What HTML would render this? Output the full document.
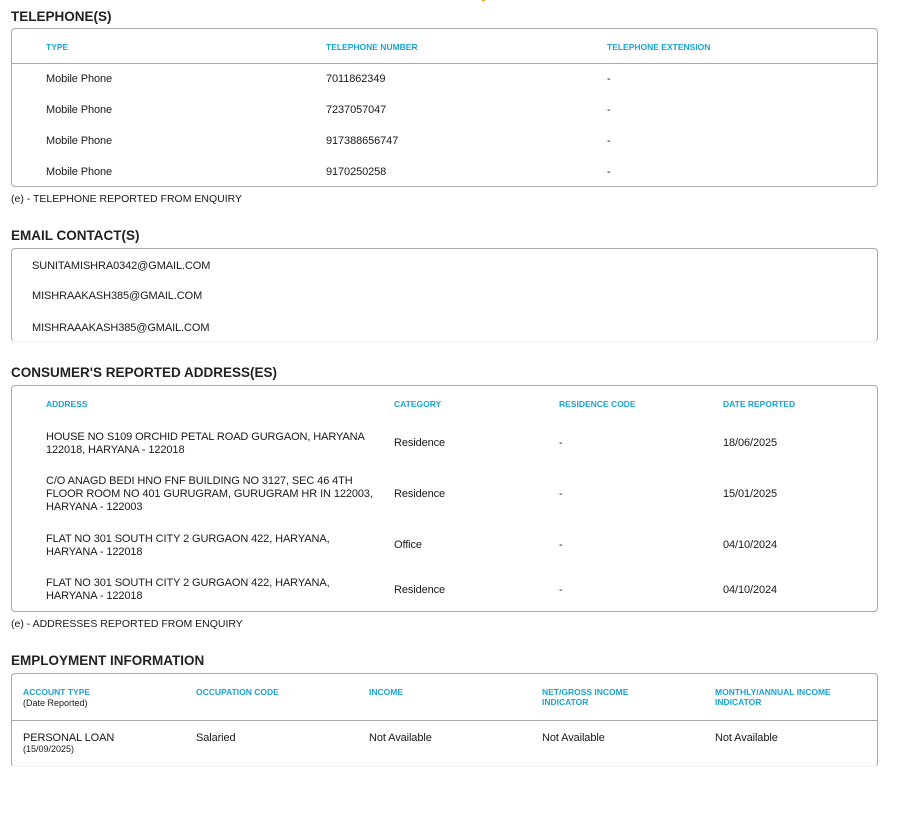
<!DOCTYPE html>
<html><head><meta charset="utf-8"><style>
*{margin:0;padding:0;box-sizing:border-box}
body{width:907px;height:816px;background:#fff;position:relative;font-family:"Liberation Sans",sans-serif;color:#1a1a1a;overflow:hidden}
.a{position:absolute;white-space:nowrap}
.t{font-size:13.5px;font-weight:bold;color:#222;letter-spacing:0px;margin-top:1px}
.h{font-size:8.5px;font-weight:bold;color:#1ba3d1;line-height:10px;margin-top:1px}
.d{font-size:11px;line-height:13px;letter-spacing:-0.1px;margin-top:2px}
.s{font-size:9px;line-height:11px;margin-top:2px}
.n{font-size:10.5px;margin-top:1px}
.box{position:absolute;border:1px solid #aaa;border-radius:4px}
.ln{position:absolute;height:1px;background:#aaa}
</style></head><body>
<div class="a" style="left:482px;top:-2px;width:3px;height:3px;background:#f39a2a"></div>

<div class="a t" style="left:11px;top:8px">TELEPHONE(S)</div>
<div class="box" style="left:11px;top:28px;width:867px;height:159px"></div>
<div class="ln" style="left:11px;top:63px;width:867px"></div>
<div class="a h" style="left:46px;top:41px">TYPE</div>
<div class="a h" style="left:326px;top:41px">TELEPHONE NUMBER</div>
<div class="a h" style="left:607px;top:41px">TELEPHONE EXTENSION</div>
<div class="a d" style="left:46px;top:71px">Mobile Phone</div><div class="a d" style="left:326px;top:71px">7011862349</div><div class="a d" style="left:607px;top:71px">-</div>
<div class="a d" style="left:46px;top:102px">Mobile Phone</div><div class="a d" style="left:326px;top:102px">7237057047</div><div class="a d" style="left:607px;top:102px">-</div>
<div class="a d" style="left:46px;top:133px">Mobile Phone</div><div class="a d" style="left:326px;top:133px">917388656747</div><div class="a d" style="left:607px;top:133px">-</div>
<div class="a d" style="left:46px;top:164px">Mobile Phone</div><div class="a d" style="left:326px;top:164px">9170250258</div><div class="a d" style="left:607px;top:164px">-</div>
<div class="a n" style="left:11px;top:192px">(e) - TELEPHONE REPORTED FROM ENQUIRY</div>

<div class="a t" style="left:11px;top:227px">EMAIL CONTACT(S)</div>
<div class="box" style="left:11px;top:248px;width:867px;height:94px;border-bottom-color:#eee"></div>
<div class="a d" style="left:32px;top:258px">SUNITAMISHRA0342@GMAIL.COM</div>
<div class="a d" style="left:32px;top:288px">MISHRAAKASH385@GMAIL.COM</div>
<div class="a d" style="left:32px;top:320px">MISHRAAAKASH385@GMAIL.COM</div>

<div class="a t" style="left:11px;top:364px">CONSUMER'S REPORTED ADDRESS(ES)</div>
<div class="box" style="left:11px;top:385px;width:867px;height:227px"></div>
<div class="a h" style="left:46px;top:398px">ADDRESS</div>
<div class="a h" style="left:394px;top:398px">CATEGORY</div>
<div class="a h" style="left:559px;top:398px">RESIDENCE CODE</div>
<div class="a h" style="left:723px;top:398px">DATE REPORTED</div>
<div class="a d" style="left:46px;top:429px">HOUSE NO S109 ORCHID PETAL ROAD GURGAON, HARYANA<br>122018, HARYANA - 122018</div>
<div class="a d" style="left:394px;top:435px">Residence</div><div class="a d" style="left:559px;top:435px">-</div><div class="a d" style="left:723px;top:435px">18/06/2025</div>
<div class="a d" style="left:46px;top:473px">C/O ANAGD BEDI HNO FNF BUILDING NO 3127, SEC 46 4TH<br>FLOOR ROOM NO 401 GURUGRAM, GURUGRAM HR IN 122003,<br>HARYANA - 122003</div>
<div class="a d" style="left:394px;top:486px">Residence</div><div class="a d" style="left:559px;top:486px">-</div><div class="a d" style="left:723px;top:486px">15/01/2025</div>
<div class="a d" style="left:46px;top:531px">FLAT NO 301 SOUTH CITY 2 GURGAON 422, HARYANA,<br>HARYANA - 122018</div>
<div class="a d" style="left:394px;top:537px">Office</div><div class="a d" style="left:559px;top:537px">-</div><div class="a d" style="left:723px;top:537px">04/10/2024</div>
<div class="a d" style="left:46px;top:575px">FLAT NO 301 SOUTH CITY 2 GURGAON 422, HARYANA,<br>HARYANA - 122018</div>
<div class="a d" style="left:394px;top:582px">Residence</div><div class="a d" style="left:559px;top:582px">-</div><div class="a d" style="left:723px;top:582px">04/10/2024</div>
<div class="a n" style="left:11px;top:617px">(e) - ADDRESSES REPORTED FROM ENQUIRY</div>

<div class="a t" style="left:11px;top:652px">EMPLOYMENT INFORMATION</div>
<div class="box" style="left:11px;top:673px;width:867px;height:94px;border-bottom-color:#eee"></div>
<div class="ln" style="left:11px;top:720px;width:867px"></div>
<div class="a h" style="left:23px;top:686px">ACCOUNT TYPE</div>
<div class="a s" style="left:23px;top:696px">(Date Reported)</div>
<div class="a h" style="left:196px;top:686px">OCCUPATION CODE</div>
<div class="a h" style="left:369px;top:686px">INCOME</div>
<div class="a h" style="left:542px;top:686px">NET/GROSS INCOME<br>INDICATOR</div>
<div class="a h" style="left:715px;top:686px">MONTHLY/ANNUAL INCOME<br>INDICATOR</div>
<div class="a d" style="left:23px;top:730px">PERSONAL LOAN</div>
<div class="a s" style="left:23px;top:742px">(15/09/2025)</div>
<div class="a d" style="left:196px;top:730px">Salaried</div>
<div class="a d" style="left:369px;top:730px">Not Available</div>
<div class="a d" style="left:542px;top:730px">Not Available</div>
<div class="a d" style="left:715px;top:730px">Not Available</div>
</body></html>
